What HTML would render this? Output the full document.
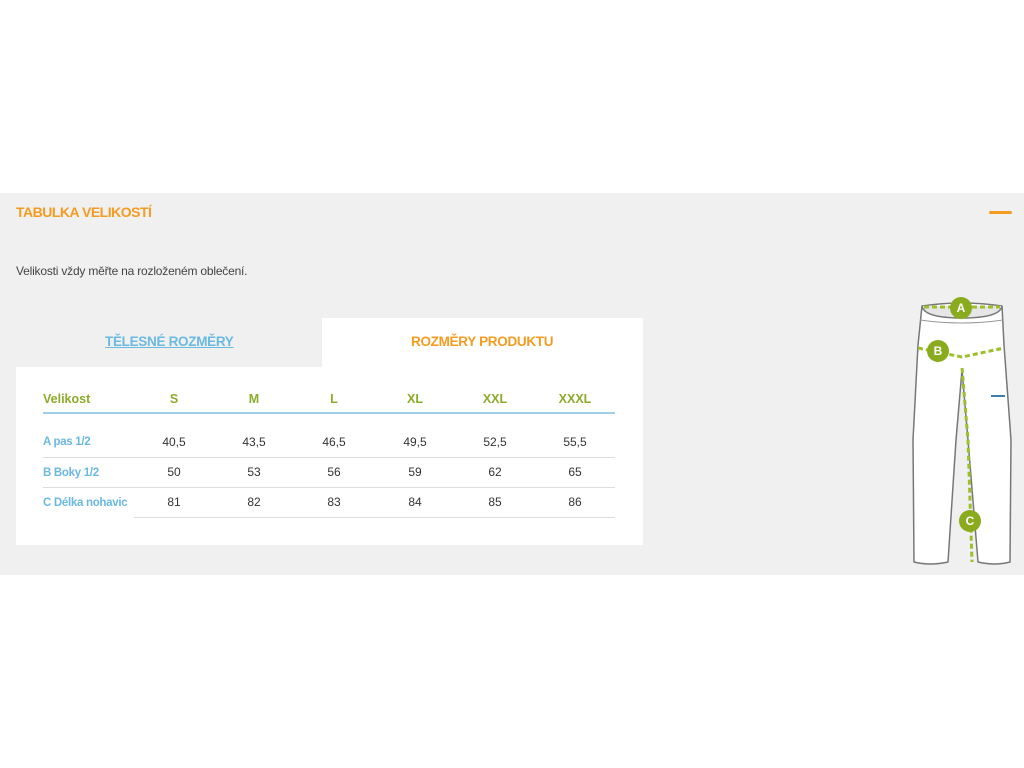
<!DOCTYPE html>
<html><head><meta charset="utf-8"><style>
body{margin:0;width:1024px;height:768px;background:#fff;position:relative;overflow:hidden;font-family:"Liberation Sans",sans-serif}
.a{position:absolute;white-space:nowrap}
.band{position:absolute;left:0;top:193px;width:1024px;height:382px;background:#f0f0f0}
.c{position:absolute;transform:translateX(-50%);white-space:nowrap;font-size:12px;color:#333}
.h{font-weight:bold;color:#8bab2a;font-size:12.5px}
.lb{position:absolute;left:43px;font-weight:bold;color:#6ab9e0;font-size:11.5px;white-space:nowrap;letter-spacing:-0.3px}
.ln{position:absolute;height:1px;background:#ddd}
</style></head><body>
<div class="band"></div>
<div class="a" style="left:16px;top:204px;font-size:14px;font-weight:bold;color:#f39c1f;letter-spacing:-0.5px">TABULKA VELIKOSTÍ</div>
<div class="a" style="left:989px;top:211px;width:23px;height:3px;background:#f39c1f;border-radius:2px"></div>
<div class="a" style="left:16px;top:264px;font-size:12px;color:#444;letter-spacing:-0.2px">Velikosti vždy měřte na rozloženém oblečení.</div>
<div class="a" style="left:322px;top:318px;width:321px;height:60px;background:#fff"></div>
<div class="a" style="left:16px;top:367px;width:627px;height:178px;background:#fff"></div>
<div class="a" style="left:105px;top:334px;font-size:13.5px;font-weight:bold;color:#6ab9e0;text-decoration:underline;letter-spacing:-0.3px">TĚLESNÉ ROZMĚRY</div>
<div class="a" style="left:411px;top:334px;font-size:13.5px;font-weight:bold;color:#f39c1f;letter-spacing:-0.3px">ROZMĚRY PRODUKTU</div>
<div class="a h" style="left:43px;top:392px">Velikost</div>
<div class="c h" style="left:174px;top:392px">S</div>
<div class="c h" style="left:254px;top:392px">M</div>
<div class="c h" style="left:334px;top:392px">L</div>
<div class="c h" style="left:415px;top:392px">XL</div>
<div class="c h" style="left:495px;top:392px">XXL</div>
<div class="c h" style="left:575px;top:392px">XXXL</div>
<div class="a" style="left:43px;top:412px;width:572px;height:2px;background:#9fcde6"></div>
<div class="lb" style="top:436px">A pas 1/2</div>
<div class="lb" style="top:467px">B Boky 1/2</div>
<div class="lb" style="top:497px">C Délka nohavic</div>
<div class="c" style="left:174px;top:435px">40,5</div><div class="c" style="left:254px;top:435px">43,5</div><div class="c" style="left:334px;top:435px">46,5</div><div class="c" style="left:415px;top:435px">49,5</div><div class="c" style="left:495px;top:435px">52,5</div><div class="c" style="left:575px;top:435px">55,5</div>
<div class="c" style="left:174px;top:465px">50</div><div class="c" style="left:254px;top:465px">53</div><div class="c" style="left:334px;top:465px">56</div><div class="c" style="left:415px;top:465px">59</div><div class="c" style="left:495px;top:465px">62</div><div class="c" style="left:575px;top:465px">65</div>
<div class="c" style="left:174px;top:495px">81</div><div class="c" style="left:254px;top:495px">82</div><div class="c" style="left:334px;top:495px">83</div><div class="c" style="left:415px;top:495px">84</div><div class="c" style="left:495px;top:495px">85</div><div class="c" style="left:575px;top:495px">86</div>
<div class="ln" style="left:43px;top:457px;width:572px"></div>
<div class="ln" style="left:43px;top:487px;width:572px"></div>
<div class="ln" style="left:134px;top:517px;width:481px"></div>
<svg class="a" style="left:900px;top:290px" width="124" height="280" viewBox="0 0 124 280">
<g fill="#fff" stroke="#777" stroke-width="1.5" stroke-linejoin="round">
<path d="M22 16 Q62 10 102 16 L104 55 L111 150 L110 272 Q95 276 78 272 L68 150 L62 80 L56 150 L48 272 Q30 276 14 272 L13 150 L18 55 Z"/>
<path d="M22 16 Q24 28 62 28 Q100 28 102 16" fill="#e6e6e6"/>
<path d="M20 30 Q62 36 103 30" fill="none" stroke="#999" stroke-width="1"/>
</g>
<g stroke="#9cbf2b" stroke-width="3" stroke-dasharray="5 3" fill="none">
<path d="M24 17 L100 17"/>
<path d="M18 58 L62 67 L104 58"/>
<path d="M62 78 L68 150 L72 272"/>
</g>
<g fill="#8bab1e"><circle cx="61" cy="18" r="11"/><circle cx="38" cy="61" r="11"/><circle cx="70" cy="231" r="11"/></g>
<g fill="#fff" font-size="12" font-weight="bold" text-anchor="middle" font-family="Liberation Sans,sans-serif">
<text x="61" y="22">A</text><text x="38" y="65">B</text><text x="70" y="235">C</text></g>
<rect x="91" y="105" width="14" height="2" fill="#3a7fb0"/>
</svg>
</body></html>
